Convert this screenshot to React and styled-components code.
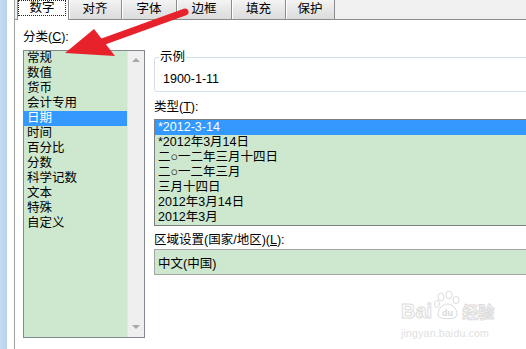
import React from "react";
import styled, { createGlobalStyle } from "styled-components";

const GlobalStyle = createGlobalStyle`
  html, body {
    margin: 0;
    padding: 0;
    background: #fff;
    overflow: hidden;
  }
`;

const Page = styled.div`
  position: relative;
  display: flex;
  width: 526px;
  height: 349px;
  overflow: hidden;
  background: #fff;
  font-family: "Liberation Sans", "Noto Sans CJK SC", sans-serif;
  font-size: 12.5px;
  color: #000;
`;

const FrameStrip = styled.div`
  width: 7px;
  flex-shrink: 0;
  background: linear-gradient(90deg, #c6dbf1, #b9d1ea);
`;

const Gutter = styled.div`
  width: 7px;
  flex-shrink: 0;
`;

const Panel = styled.div`
  flex: 1;
  min-width: 0;
  display: flex;
  flex-direction: column;
  border-left: 1px solid #a0a0a0;
`;

const TabBar = styled.div`
  height: 19px;
  display: flex;
  padding-left: 2px;
  background: #f0f0f0;
  border-bottom: 1px solid #8c8c8c;
`;

const Tab = styled.div`
  position: relative;
  width: ${(p) => p.$w}px;
  height: ${(p) => (p.$active ? 20 : 19)}px;
  margin-bottom: ${(p) => (p.$active ? -1 : 0)}px;
  box-sizing: border-box;
  display: flex;
  align-items: ${(p) => (p.$active ? "flex-start" : "center")};
  justify-content: center;
  background: ${(p) =>
    p.$active ? "#fff" : "linear-gradient(#f4f4f4, #e4e4e4 60%, #dcdcdc)"};
  border-left: ${(p) => (p.$active ? "1px solid #8c8c8c" : "none")};
  border-right: 1px solid #8c8c8c;
  box-shadow: ${(p) => (p.$active ? "none" : "inset 1px 0 #fff")};
  line-height: 15px;
  z-index: ${(p) => (p.$active ? 1 : 0)};
`;

const FocusRect = styled.div`
  flex: 1;
  height: 16px;
  margin: 0 2px 0 0;
  box-sizing: border-box;
  border: 1px dotted #222;
  display: flex;
  align-items: center;
  justify-content: center;
`;

const Content = styled.div`
  flex: 1;
  display: flex;
  gap: 9px;
  padding-left: 8px;
`;

const LeftCol = styled.div`
  width: 122px;
  flex-shrink: 0;
  display: flex;
  flex-direction: column;
`;

const RightCol = styled.div`
  flex: 1;
  margin-right: -20px;
  display: flex;
  flex-direction: column;
`;

const Label = styled.div`
  line-height: 15px;
  margin-top: ${(p) => p.$mt}px;
  margin-bottom: ${(p) => p.$mb}px;
  white-space: nowrap;
`;

const ListBox = styled.div`
  height: ${(p) => p.$h}px;
  box-sizing: border-box;
  display: flex;
  border: 1px solid ${(p) => p.$border || "#828790"};
  background: #cde8cf;
`;

const Items = styled.div`
  flex: 1;
  display: flex;
  flex-direction: column;
`;

const Item = styled.div`
  height: 15px;
  line-height: 15px;
  padding-left: ${(p) => p.$pad}px;
  white-space: nowrap;
  background: ${(p) => (p.$selected ? "#3399ff" : "transparent")};
  color: ${(p) => (p.$selected ? "#fff" : "#000")};
`;

const ScrollBar = styled.div`
  width: 17px;
  display: flex;
  flex-direction: column;
  justify-content: space-between;
  align-items: center;
  padding: 7px 0 8px;
  box-sizing: border-box;
  background: #efefef;
  border-left: 1px solid #e6e6e6;
`;

const Arrow = styled.div`
  width: 0;
  height: 0;
  border-left: 4px solid transparent;
  border-right: 4px solid transparent;
  ${(p) =>
    p.$down
      ? "border-top: 4px solid #a8a8a8;"
      : "border-bottom: 4px solid #a8a8a8;"}
`;

const SampleGroup = styled.fieldset`
  margin: 30px 0 0;
  padding: 7px 8px 4px;
  min-width: 0;
  border: 1px solid #d5dfe5;
  border-radius: 3px;
  line-height: 15px;
`;

const Legend = styled.legend`
  padding: 0 1px;
  margin-left: -4px;
  line-height: 15px;
`;

const LocaleBox = styled.div`
  height: 26px;
  box-sizing: border-box;
  display: flex;
  align-items: center;
  padding-left: 3px;
  border: 1px solid #a5a5a5;
  background: #cde8cf;
`;

const Overlay = styled.svg`
  position: absolute;
  left: 0;
  top: 0;
  pointer-events: none;
`;

const Watermark = styled.div`
  position: absolute;
  left: 401px;
  top: 291px;
  display: flex;
  flex-direction: column;
  align-items: flex-start;
  color: #e2e2e2;
  pointer-events: none;
`;

const MarkRow = styled.div`
  display: flex;
  align-items: flex-end;
  gap: 2px;
`;

const MarkText = styled.span`
  font-family: "Liberation Sans", "Noto Sans CJK SC", sans-serif;
  font-size: ${(p) => p.$size}px;
  font-weight: bold;
  color: #fff;
  -webkit-text-stroke: 1px #dcdcdc;
  line-height: 1;
`;

const MarkUrl = styled.span`
  margin-top: 6px;
  font-size: 10.5px;
  color: #e0e0e0;
  letter-spacing: 0.2px;
`;

const tabs = [
  { label: "数字", w: 52, active: true },
  { label: "对齐", w: 53 },
  { label: "字体", w: 55 },
  { label: "边框", w: 55 },
  { label: "填充", w: 54 },
  { label: "保护", w: 49 },
];

const categories = [
  "常规",
  "数值",
  "货币",
  "会计专用",
  "日期",
  "时间",
  "百分比",
  "分数",
  "科学记数",
  "文本",
  "特殊",
  "自定义",
];

const types = [
  "*2012-3-14",
  "*2012年3月14日",
  "二○一二年三月十四日",
  "二○一二年三月",
  "三月十四日",
  "2012年3月14日",
  "2012年3月",
];

export default function App() {
  return (
    <>
      <GlobalStyle />
      <Page>
        <FrameStrip />
        <Gutter />
        <Panel>
          <TabBar>
            {tabs.map((t) => (
              <Tab key={t.label} $w={t.w} $active={t.active}>
                {t.active ? <FocusRect>{t.label}</FocusRect> : t.label}
              </Tab>
            ))}
          </TabBar>
          <Content>
            <LeftCol>
              <Label $mt={10} $mb={5}>
                分类(<u>C</u>):
              </Label>
              <ListBox $h={288}>
                <Items>
                  {categories.map((c) => (
                    <Item key={c} $pad={3} $selected={c === "日期"}>
                      {c}
                    </Item>
                  ))}
                </Items>
                <ScrollBar>
                  <Arrow />
                  <Arrow $down />
                </ScrollBar>
              </ListBox>
            </LeftCol>
            <RightCol>
              <SampleGroup>
                <Legend>示例</Legend>
                1900-1-11
              </SampleGroup>
              <Label $mt={8} $mb={4}>
                类型(<u>T</u>):
              </Label>
              <ListBox $h={107} $border="#7f7f7f">
                <Items>
                  {types.map((t, i) => (
                    <Item key={t} $pad={3} $selected={i === 0}>
                      {t}
                    </Item>
                  ))}
                </Items>
              </ListBox>
              <Label $mt={7} $mb={1}>
                区域设置(国家/地区)(<u>L</u>):
              </Label>
              <LocaleBox>中文(中国)</LocaleBox>
            </RightCol>
          </Content>
        </Panel>

        <Watermark>
          <MarkRow>
            <MarkText $size={20}>Bai</MarkText>
            <svg width="26" height="30" viewBox="0 0 26 30">
              <g fill="#fff" stroke="#dcdcdc" strokeWidth="1">
                <ellipse cx="7" cy="6" rx="3" ry="4" />
                <ellipse cx="15" cy="4" rx="3" ry="4" />
                <ellipse cx="22" cy="9" rx="3" ry="3.5" />
                <ellipse cx="3" cy="13" rx="2.5" ry="3.5" />
                <path d="M4 24 C4 16 10 13 13 13 C17 13 23 16 23 24 C23 29 4 29 4 24 Z" />
              </g>
              <text
                x="13.5"
                y="25"
                fontSize="9"
                textAnchor="middle"
                fill="#d8d8d8"
                fontFamily="Liberation Sans, sans-serif"
                fontWeight="bold"
              >
                du
              </text>
            </svg>
            <MarkText $size={16}>经验</MarkText>
          </MarkRow>
          <MarkUrl>jingyan.baidu.com</MarkUrl>
        </Watermark>

        <Overlay width="526" height="349" viewBox="0 0 526 349">
          <line
            x1="185"
            y1="12"
            x2="102"
            y2="42"
            stroke="#e8222b"
            strokeWidth="7"
            strokeLinecap="round"
          />
          <polygon points="65,53 94,29 115,56" fill="#e8222b" />
        </Overlay>
      </Page>
    </>
  );
}
